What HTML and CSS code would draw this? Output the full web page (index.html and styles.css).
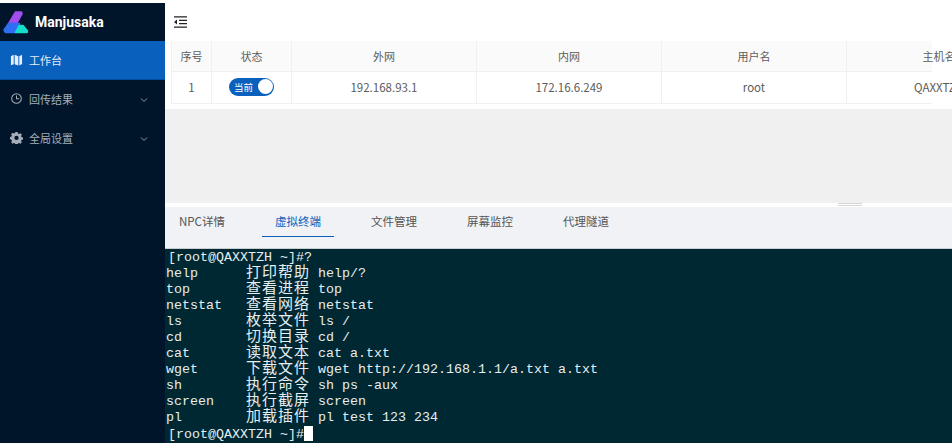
FILE: index.html
```html
<!DOCTYPE html>
<html lang="zh">
<head>
<meta charset="utf-8">
<title>Manjusaka</title>
<link rel="stylesheet" href="styles.css">
</head>
<body>
<div class="app">
  <aside class="sider">
    <div class="logo">
      <svg class="logo-mark" width="26" height="24" viewBox="0 0 26 24" stroke-linejoin="round" stroke-width="1.500">
        <path d="M12.500 2 H18.500 L19 4 L14 13 H6 Z" fill="#a24df0" stroke="#a24df0"/>
        <path d="M5.500 13.500 H16.500 L12 22.500 H2.500 L1 20 Z" fill="#2f6df2" stroke="#2f6df2"/>
        <path d="M16 15.500 H20 L24.500 21 L24 22.500 H12.500 Z" fill="#16dccb" stroke="#16dccb"/>
      </svg>
      <span class="logo-text">Manjusaka</span>
    </div>
    <nav class="menu">
      <a class="item active">
        <svg class="mi" width="13" height="13" viewBox="0 0 14 14"><path d="M1 3.500 4 2v10l-3 1.200zM5 2l4 1.500v10L5 12zM10 3.400 13 2v9.800L10 13.400z" fill="#e8eef7"/></svg>
        <span>工作台</span>
      </a>
      <a class="item">
        <svg class="mi" width="13" height="13" viewBox="0 0 14 14" fill="none" stroke="#a5adb8" stroke-width="1.100"><circle cx="7" cy="7" r="5.200"/><path d="M7 3.800V7.300H10"/></svg>
        <span>回传结果</span>
        <svg class="chev" width="10" height="6" viewBox="0 0 10 6" fill="none" stroke="#8e98a5" stroke-width="1"><path d="M2 1.500 5 4.500 8 1.500"/></svg>
      </a>
      <a class="item">
        <svg class="mi" width="13" height="13" viewBox="0 0 14 14"><path fill-rule="evenodd" fill="#a5adb8" d="M5.800 1h2.400l.4 1.700 1.100.5 1.500-.9 1.600 1.700-.9 1.500.4 1 1.700.4v2.300l-1.700.5-.4 1 .9 1.500-1.600 1.600-1.500-.9-1.100.5-.4 1.600H5.800l-.4-1.600-1.100-.5-1.500.9-1.600-1.600.9-1.500-.4-1L0 8.700V6.400l1.700-.4.4-1-.9-1.500 1.600-1.700 1.500.9 1.100-.5zM7 5.200a2.300 2.300 0 1 0 0 4.600 2.300 2.300 0 0 0 0-4.600z"/></svg>
        <span>全局设置</span>
        <svg class="chev" width="10" height="6" viewBox="0 0 10 6" fill="none" stroke="#8e98a5" stroke-width="1"><path d="M2 1.500 5 4.500 8 1.500"/></svg>
      </a>
    </nav>
  </aside>
  <main class="main">
    <header class="topbar">
      <svg width="13" height="12" viewBox="0 0 13 12" fill="none" stroke="#222" stroke-width="1.200"><path d="M0 .8H13M5 4.300H13M5 7.700H13M0 11.200H13"/><path d="M3 3.500V8.500L0 6z" fill="#222" stroke="none"/></svg>
    </header>
    <section class="upper">
      <div class="panel">
        <div class="grid head">
          <div class="c">序号</div><div class="c">状态</div><div class="c">外网</div><div class="c">内网</div><div class="c">用户名</div><div class="c last">主机名</div>
        </div>
        <div class="grid row">
          <div class="c">1</div>
          <div class="c"><span class="switch"><span class="sw-text">当前</span><span class="knob"></span></span></div>
          <div class="c">192.168.93.1</div><div class="c">172.16.6.249</div><div class="c">root</div><div class="c last">QAXXTZH</div>
        </div>
      </div>
    </section>
    <section class="lower">
      <div class="divider"><span class="grip"></span></div>
      <div class="tabs">
        <span class="tab">NPC详情</span>
        <span class="tab on">虚拟终端</span>
        <span class="tab">文件管理</span>
        <span class="tab">屏幕监控</span>
        <span class="tab">代理隧道</span>
      </div>
      <pre class="term"><span class="p">[root@QAXXTZH ~]#?</span>
help      <i>打印帮助</i> help/?
top       <i>查看进程</i> top
netstat   <i>查看网络</i> netstat
ls        <i>枚举文件</i> ls /
cd        <i>切换目录</i> cd /
cat       <i>读取文本</i> cat a.txt
wget      <i>下载文件</i> wget http://192.168.1.1/a.txt a.txt
sh        <i>执行命令</i> sh ps -aux
screen    <i>执行截屏</i> screen
pl        <i>加载插件</i> pl test 123 234
<span class="p">[root@QAXXTZH ~]#<b class="cursor"></b></span></pre>
    </section>
  </main>
</div>
</body>
</html>
```
FILE: styles.css
```css
* { box-sizing: border-box; }
html, body { margin: 0; height: 100%; overflow: hidden; background: #fff; }
body { font-family: "Noto Sans CJK SC", "Noto Sans", sans-serif; font-size: 12px; color: #555; }
.app { display: flex; height: 443px; width: 952px; padding-top: 3px; }
.sider { width: 165px; flex: none; background: #001529; color: #a5adb8; }
.logo { height: 38px; display: flex; align-items: center; padding-left: 3px; gap: 6px; }
.logo-text { font-family: "Roboto", sans-serif; font-weight: 700; font-size: 14px; color: #fff; }
.logo-mark { flex: none; }
.menu { display: flex; flex-direction: column; }
.item { height: 39px; display: flex; align-items: center; padding-left: 10px; gap: 6px; font-size: 11px; line-height: 16px; padding-bottom: 2px; }
.item span { flex: 1; }
.item.active { background: #0960bd; color: #e8eef7; border-bottom: 1px solid #004f9e; padding-bottom: 1px; }
.chev { margin-right: 16px; margin-top: 3px; }
.mi { flex: none; }
.main { flex: 1; min-width: 0; display: flex; flex-direction: column; margin-top: -3px; overflow: hidden; }
.topbar { height: 41px; padding: 16px 0 0 9px; flex: none; line-height: 0; }
.upper { height: 162px; flex: none; background: #f0f0f0; }
.panel { background: #fff; padding: 0 0 5px 6px; height: 68px; }
.grid { display: grid; grid-template-columns: 41px 80px 185px 185px 185px 185px; width: 761px; }
.head { height: 31px; background: #fafafa; border-bottom: 1px solid #f0f0f0; }
.row { height: 32px; border-bottom: 1px solid #f0f0f0; font-size: 11.500px; }
.c { display: flex; align-items: center; justify-content: center; border-right: 1px solid #f0f0f0; white-space: nowrap; color: #5c5c5c; }
.head .c { font-size: 11px; }
.row .c { padding-bottom: 2px; }
.row .c:first-child { border-left: 1px solid #f0f0f0; }
.head .c:first-child { border-left: 1px solid #f0f0f0; }
.switch { width: 45px; height: 18px; border-radius: 9px; background: #0960bd; display: flex; align-items: center; justify-content: space-between; padding: 0 1.500px 0 5px; }
.sw-text { color: #fff; font-size: 9.500px; }
.knob { width: 15px; height: 15px; border-radius: 50%; background: #fff; }
.lower { flex: 1; display: flex; flex-direction: column; min-height: 0; background: #f0f2f5; }
.divider { height: 4px; background: #fff; flex: none; padding-left: 673px; }
.grip { display: block; width: 24px; height: 3px; border-top: 1px solid #d8d8d8; border-bottom: 1px solid #d8d8d8; }
.tabs { height: 41px; flex: none; display: flex; gap: 24px; padding-left: 1px; align-items: flex-start; font-size: 11.500px; }
.tab { padding: 0 13px; height: 30px; line-height: 29px; white-space: nowrap; color: #555; }
.tab.on { color: #0960bd; border-bottom: 1px solid #0960bd; }
.term { flex: 1; margin: 0; background: #002833; color: #e6eef0; font-family: "Liberation Mono", monospace; font-size: 13.330px; line-height: 16px; padding: 1px 0 0 1px; border-top: 1px solid #c9ced2; overflow: hidden; white-space: pre; }
.term i { font-style: normal; font-family: "Noto Sans CJK SC", sans-serif; font-size: 15px; line-height: 0; letter-spacing: 1px; }
.p { padding-left: 2px; }
.cursor { display: inline-block; width: 9px; height: 15px; background: #fff; vertical-align: -3px; }
```
